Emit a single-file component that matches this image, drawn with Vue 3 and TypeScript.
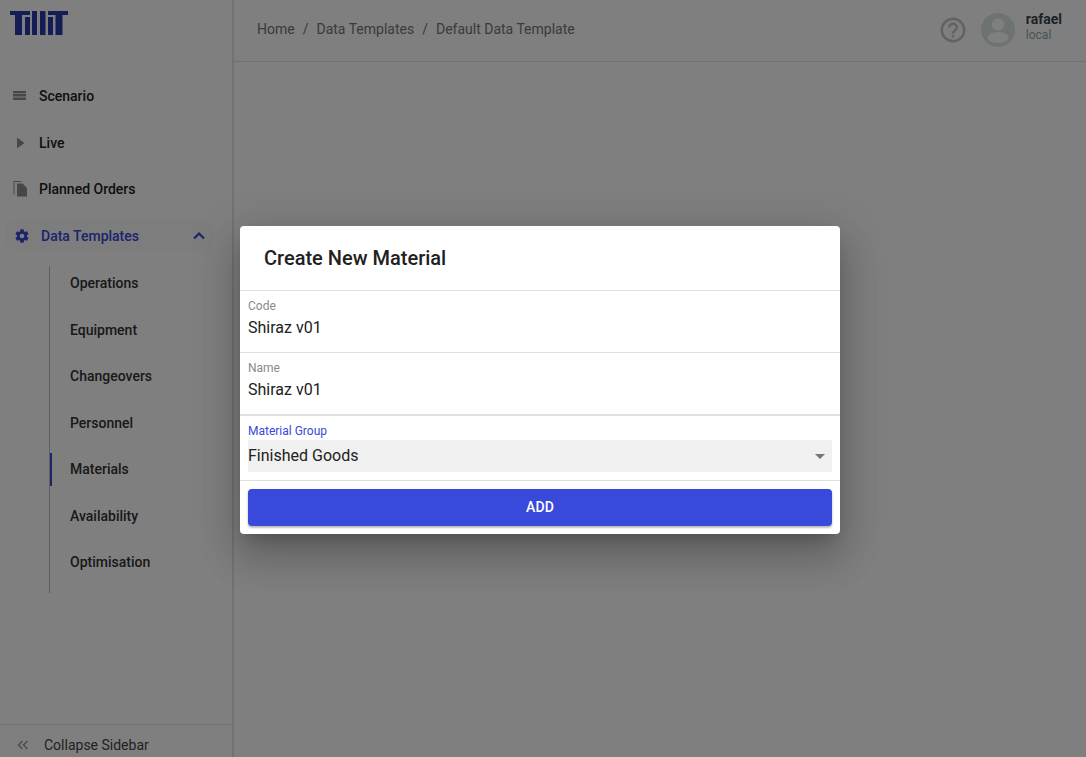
<script setup lang="ts">
const mainLinks = [
  { label: 'Scenario', icon: 'M1 3h13v2.2H1zM1 6.1h13v2.5H1zM1 9.5h13v2.5H1z' },
  { label: 'Live', icon: 'M5 2.5v11L12.5 8z' },
  {
    label: 'Planned Orders',
    icon: 'M1.5 0h8v1H2.5v12.5h-1zM5 2.5h5.6L15 7v8.5H5z',
  },
]

const subLinks = ['Operations', 'Equipment', 'Changeovers', 'Personnel', 'Materials', 'Availability', 'Optimisation']
const crumbs = ['Home', 'Data Templates', 'Default Data Template']
</script>

<template>
  <div class="page">
    <aside class="sidebar">
      <div class="logo-row">
        <svg class="logo" width="58" height="24" viewBox="0 0 58 24" fill="#2b3bae">
          <path d="M0 0h20v4H0zM38 0h20v4H38z" />
          <path d="M5 0h7v24H5zM15 6h5v18h-5zM22 0h5v24h-5zM30 0h5.500v24H30zM38 6h5v18h-5zM45.500 0h7v24h-7z" />
        </svg>
      </div>
      <nav class="nav">
        <a v-for="link in mainLinks" :key="link.label" class="nav-row">
          <svg class="nav-icon" width="16" height="16" viewBox="0 0 16 16" fill="#8f8f8f"><path :d="link.icon" /></svg>
          <span>{{ link.label }}</span>
        </a>
        <a class="nav-row group-row">
          <svg class="group-icon" width="16" height="16" viewBox="0 0 24 24" fill="#3949d9">
            <path d="M19.4 13c.04-.33.1-.66.1-1s-.06-.67-.1-1l2.1-1.65c.2-.15.25-.42.12-.64l-2-3.46c-.12-.22-.38-.3-.6-.22l-2.5 1c-.52-.4-1.07-.73-1.7-.98l-.37-2.65A.5.5 0 0 0 14 2h-4a.5.5 0 0 0-.5.42l-.37 2.65c-.62.25-1.18.59-1.7.98l-2.49-1c-.22-.08-.48 0-.6.22l-2 3.46c-.13.22-.08.49.12.64L4.57 11c-.04.33-.07.67-.07 1s.03.67.07 1l-2.11 1.65c-.2.15-.25.42-.12.64l2 3.46c.12.22.38.3.6.22l2.49-1c.52.4 1.08.73 1.7.98l.37 2.65c.04.24.25.42.5.42h4c.25 0 .46-.18.5-.42l.37-2.65c.62-.25 1.18-.59 1.7-.98l2.49 1c.22.08.48 0 .6-.22l2-3.46c.13-.22.07-.49-.12-.64zM12 15.500a3.500 3.500 0 1 1 0-7 3.500 3.500 0 0 1 0 7z" />
          </svg>
          <span class="group-label">Data Templates</span>
          <svg width="20" height="20" viewBox="0 0 24 24" fill="none" stroke="#3949d9" stroke-width="2.6"><path d="M6 15l6-6 6 6" /></svg>
        </a>
        <div class="sub-list">
          <a v-for="item in subLinks" :key="item" class="sub-row" :class="{ active: item === 'Materials' }">{{ item }}</a>
        </div>
      </nav>
      <div class="collapse">
        <svg width="14" height="14" viewBox="0 0 14 14" fill="none" stroke="#9a9a9a" stroke-width="1.500"><path d="M6.500 3L2.500 7l4 4M11.500 3l-4 4 4 4" /></svg>
        <span>Collapse Sidebar</span>
      </div>
    </aside>

    <div class="main">
      <header class="topbar">
        <div class="crumbs">
          <template v-for="(crumb, i) in crumbs" :key="crumb">
            <span v-if="i > 0" class="sep">/</span>
            <span>{{ crumb }}</span>
          </template>
        </div>
        <div class="account">
          <svg class="help" width="30" height="30" viewBox="0 0 24 24" fill="#c4c4c4">
            <path d="M11 18h2v-2h-2zm1-16a10 10 0 1 0 0 20 10 10 0 0 0 0-20zm0 18a8 8 0 1 1 0-16 8 8 0 0 1 0 16zm0-14a4 4 0 0 0-4 4h2a2 2 0 1 1 4 0c0 2-3 1.750-3 5h2c0-2.250 3-2.500 3-5a4 4 0 0 0-4-4z" />
          </svg>
          <svg width="34" height="34" viewBox="0 0 34 34">
            <circle cx="17" cy="17" r="17" fill="#dbe6e6" />
            <circle cx="17" cy="11.500" r="6" fill="#fff" />
            <ellipse cx="17" cy="24.500" rx="10.500" ry="5.500" fill="#fff" />
          </svg>
          <div class="user">
            <strong>rafael</strong>
            <span>local</span>
          </div>
        </div>
      </header>
    </div>

    <div class="overlay">
      <section class="dialog">
        <h2>Create New Material</h2>
        <div class="field">
          <label>Code</label>
          <div class="value">Shiraz v01</div>
        </div>
        <div class="field">
          <label>Name</label>
          <div class="value">Shiraz v01</div>
        </div>
        <div class="field select-field">
          <label>Material Group</label>
          <div class="select">
            <span class="select-text">Finished Goods</span>
            <i class="caret"></i>
          </div>
        </div>
        <div class="actions">
          <button type="button">ADD</button>
        </div>
      </section>
    </div>
  </div>
</template>

<style>
html,
body {
  margin: 0;
  height: 100%;
  overflow: hidden;
}
</style>

<style scoped>
.page {
  position: relative;
  display: flex;
  width: 100%;
  height: 757px;
  overflow: hidden;
  background: #fff;
  font-family: Roboto, 'Liberation Sans', sans-serif;
  color: #212121;
}

.sidebar {
  display: flex;
  flex-direction: column;
  flex: none;
  width: 232px;
  border-right: 2px solid #e4e4e4;
}

.logo-row {
  height: 72.75px;
  padding: 11px 0 0 10px;
  box-sizing: border-box;
}

.logo {
  display: block;
}

.nav {
  flex: 1;
}

.nav-row {
  display: flex;
  align-items: center;
  height: 46.5px;
  padding-left: 12px;
  font-size: 14px;
  font-weight: 500;
  color: #212121;
}

.nav-icon {
  flex: none;
  margin-right: 11px;
}

.group-row {
  position: relative;
  z-index: 0;
  padding-left: 14px;
  padding-right: 23px;
  color: #3949d9;
}

.group-row::before {
  content: '';
  position: absolute;
  z-index: -1;
  left: 6px;
  top: 8px;
  width: 207px;
  height: 30px;
  border-radius: 8px;
  background: #fafafa;
}

.group-icon {
  flex: none;
  margin-right: 11px;
}

.group-label {
  flex: 1;
}

.sub-list {
  position: relative;
  margin-left: 50px;
  padding-top: 1px;
}

.sub-list::before {
  content: '';
  position: absolute;
  left: -1px;
  top: 7px;
  bottom: -8px;
  width: 1px;
  background: #bdbdbd;
}

.sub-row {
  position: relative;
  display: flex;
  align-items: center;
  height: 46.5px;
  padding-left: 20px;
  font-size: 14px;
  font-weight: 500;
  color: #333;
}

.sub-row.active::before {
  content: '';
  position: absolute;
  left: 0;
  top: 7px;
  width: 2px;
  height: 33px;
  background: #3949d9;
}

.collapse {
  display: flex;
  align-items: center;
  flex: none;
  height: 33px;
  padding: 8px 0 0 16px;
  box-sizing: border-box;
  border-top: 1px solid #e0e0e0;
  font-size: 14px;
  color: #444;
}

.collapse span {
  margin-left: 14px;
}

.main {
  flex: 1;
  min-width: 0;
}

.topbar {
  display: flex;
  align-items: center;
  justify-content: space-between;
  height: 62px;
  padding: 0 24px 3px 23px;
  box-sizing: border-box;
  border-bottom: 1px solid #e0e0e0;
}

.crumbs {
  display: flex;
  gap: 8px;
  font-size: 14px;
  color: #757575;
}

.account {
  display: flex;
  align-items: center;
  margin-top: 1px;
}

.help {
  margin-right: 13px;
}

.user {
  display: flex;
  flex-direction: column;
  margin: 0 0 4px 11px;
  line-height: 15px;
}

.user strong {
  font-size: 14px;
  font-weight: 700;
  color: #37474f;
}

.user span {
  margin-top: 1px;
  font-size: 12px;
  color: #90a4ae;
}

.overlay {
  position: absolute;
  inset: 0;
  display: flex;
  align-items: center;
  justify-content: center;
  background: rgba(0, 0, 0, 0.5);
}

.dialog {
  width: 600px;
  margin: 3px 6px 0 0;
  border-radius: 4px;
  background: #fff;
  box-shadow: 0 11px 15px -7px rgba(0, 0, 0, 0.2), 0 24px 38px 3px rgba(0, 0, 0, 0.14), 0 9px 46px 8px rgba(0, 0, 0, 0.12);
}

h2 {
  margin: 0;
  height: 65px;
  padding-left: 24px;
  box-sizing: border-box;
  border-bottom: 1px solid #e0e0e0;
  font-size: 20px;
  font-weight: 500;
  line-height: 64px;
  color: #212121;
}

.field {
  height: 62px;
  padding: 8px 8px 0;
  box-sizing: border-box;
  border-bottom: 1px solid #e0e0e0;
}

.field label {
  display: block;
  font-size: 12px;
  line-height: 14px;
  color: #8a8a8a;
}

.value {
  margin-top: 3px;
  font-size: 16px;
  line-height: 24px;
  color: #212121;
}

.select-field {
  height: 66px;
  padding-top: 8px;
  border-top: 1px solid #e0e0e0;
}

.select-field label {
  color: #3949d9;
}

.select {
  display: flex;
  align-items: center;
  justify-content: space-between;
  height: 32px;
  margin-top: 2px;
  font-size: 16px;
  background: #f0f0f0;
}

.select-text {
  margin-bottom: 2px;
}

.caret {
  width: 0;
  height: 0;
  margin-right: 7px;
  border-left: 5px solid transparent;
  border-right: 5px solid transparent;
  border-top: 5px solid #757575;
}

.actions {
  padding: 8px;
}

button {
  display: block;
  width: 100%;
  height: 37px;
  padding: 0 0 1px;
  border: 0;
  border-radius: 4px;
  background: #3949d9;
  box-shadow: 0 2px 2px rgba(0, 0, 0, 0.2), 0 1px 3px rgba(0, 0, 0, 0.12);
  font-family: inherit;
  font-size: 14px;
  font-weight: 500;
  letter-spacing: 0.2px;
  color: #fff;
}
</style>
